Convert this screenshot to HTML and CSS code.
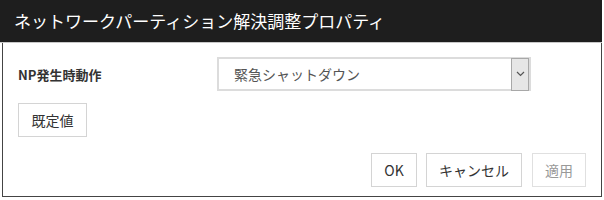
FILE: index.html
```html
<!DOCTYPE html>
<html lang="ja">
<head>
    <meta charset="UTF-8">
    <title>ネットワークパーティション解決調整プロパティ</title>
    <link rel="stylesheet" href="styles.css">
</head>
<body>
    <div class="dialog">
        <div class="dialog-title">ネットワークパーティション解決調整プロパティ</div>
        <div class="dialog-body">
            <div class="form-row">
                <label class="form-label">NP発生時動作</label>
                <div class="select-box">
                    <span class="select-value">緊急シャットダウン</span>
                    <span class="select-arrow">
                        <svg width="9" height="6" viewBox="0 0 9 6"><path d="M1 1 L4.5 4.5 L8 1" fill="none" stroke="#555" stroke-width="1.2"/></svg>
                    </span>
                </div>
            </div>
            <div class="default-row">
                <button class="btn">既定値</button>
            </div>
            <div class="footer">
                <button class="btn btn-ok">OK</button>
                <button class="btn btn-cancel">キャンセル</button>
                <button class="btn btn-apply" disabled>適用</button>
            </div>
        </div>
    </div>
</body>
</html>
```

FILE: styles.css
```css
body {
    margin: 0;
    background: #fff;
    font-family: "Noto Sans CJK JP", "Noto Sans", sans-serif;
    color: #333;
}
.dialog {
    width: 602px;
}
.dialog-title {
    background: #1e1e1e;
    color: #fff;
    height: 42px;
    line-height: 42px;
    padding-left: 14px;
    font-size: 17px;
    border-bottom: 1px solid #c8c8c8;
}
.dialog-body {
    margin-left: 2px;
    border-left: 1px solid #444;
    border-right: 1px solid #444;
    border-bottom: 1px solid #444;
    padding: 14px 15px 9px 15px;
    height: 130px;
}
.form-row {
    display: flex;
    align-items: center;
}
.form-label {
    width: 199px;
    font-size: 13px;
    font-weight: bold;
    color: #333;
}
.select-box {
    width: 310px;
    height: 30px;
    border: 2px solid #dcdcdc;
    display: flex;
    align-items: center;
    justify-content: space-between;
}
.select-value {
    padding-left: 15px;
    font-size: 14px;
    color: #555;
}
.select-arrow {
    width: 16px;
    height: 31px;
    margin-right: 0;
    background: #e6e6e6;
    border: 1px solid #a8a8a8;
    display: flex;
    align-items: center;
    justify-content: center;
}
.default-row {
    margin-top: 12px;
}
.btn {
    height: 34px;
    background: #fff;
    border: 1px solid #d4d4d4;
    font-family: "Noto Sans CJK JP", "Noto Sans", sans-serif;
    font-size: 14px;
    color: #333;
    padding: 0 12px;
}
.default-row .btn {
    width: 69px;
}
.footer {
    display: flex;
    justify-content: flex-end;
    gap: 9px;
    margin-top: 16px;
}
.btn-ok {
    width: 46px;
    padding: 0;
}
.btn-cancel {
    width: 96px;
    padding: 0;
}
.btn-apply {
    width: 54px;
    padding: 0;
    margin-left: 1px;
    color: #999;
    border-color: #e0e0e0;
}
```
